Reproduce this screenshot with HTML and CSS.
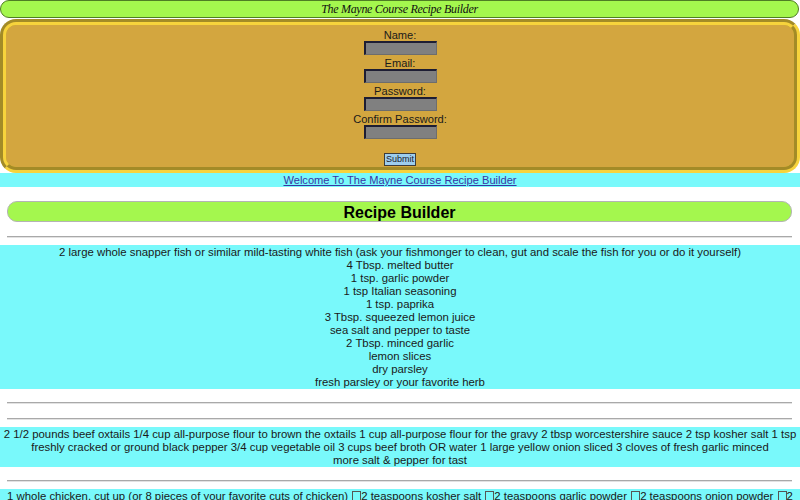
FILE: index.html
```html
<!DOCTYPE html>
<html>
<head>
<meta charset="utf-8">
<title>The Mayne Course Recipe Builder</title>
<link rel="stylesheet" href="styles.css">
</head>
<body>
<header class="top">The Mayne Course Recipe Builder</header>
<form class="signup">
  <label class="field-label">Name:</label>
  <input class="field" type="text">
  <label class="field-label">Email:</label>
  <input class="field" type="text">
  <label class="field-label">Password:</label>
  <input class="field" type="password">
  <label class="field-label">Confirm Password:</label>
  <input class="field" type="password">
  <button class="submit" type="button">Submit</button>
</form>
<div class="welcome"><a class="welcome-link" href="#">Welcome To The Mayne Course Recipe Builder</a></div>
<h1 class="builder">Recipe Builder</h1>
<hr class="rule">
<div class="recipe">2 large whole snapper fish or similar mild-tasting white fish (ask your fishmonger to clean, gut and scale the fish for you or do it yourself)<br>4 Tbsp. melted butter<br>1 tsp. garlic powder<br>1 tsp Italian seasoning<br>1 tsp. paprika<br>3 Tbsp. squeezed lemon juice<br>sea salt and pepper to taste<br>2 Tbsp. minced garlic<br>lemon slices<br>dry parsley<br>fresh parsley or your favorite herb</div>
<hr class="rule">
<hr class="rule">
<div class="recipe">2 1/2 pounds beef oxtails 1/4 cup all-purpose flour to brown the oxtails 1 cup all-purpose flour for the gravy 2 tbsp worcestershire sauce 2 tsp kosher salt 1 tsp freshly cracked or ground black pepper 3/4 cup vegetable oil 3 cups beef broth OR water 1 large yellow onion sliced 3 cloves of fresh garlic minced<br>more salt &amp; pepper for tast</div>
<hr class="rule">
<div class="recipe">1 whole chicken, cut up (or 8 pieces of your favorite cuts of chicken) <span class="box"></span>2 teaspoons kosher salt <span class="box"></span>2 teaspoons garlic powder <span class="box"></span>2 teaspoons onion powder <span class="box"></span>2 teaspoons smoked paprika <span class="box"></span>1 teaspoon black pepper <span class="box"></span>2 cups buttermilk <span class="box"></span>2 cups all-purpose flour</div>
</body>
</html>
```

FILE: styles.css
```css
html, body {
  margin: 0;
  padding: 0;
  background: #ffffff;
}

body {
  font-family: "Liberation Sans", Arial, sans-serif;
  font-size: 11.1px;
  line-height: 13px;
  color: #111;
}

.top {
  margin: 0 1px 0 0;
  height: 16px;
  line-height: 17px;
  background: #a4f74e;
  border: 1px solid #4f7d24;
  border-radius: 9px;
  text-align: center;
  font-family: "Liberation Serif", serif;
  font-style: italic;
  font-size: 12px;
  letter-spacing: -0.3px;
  color: #111;
}

.signup {
  margin: 1px 0 0 0;
  padding: 3px 0 1px;
  background: #d3a63f;
  border: 6px groove #f7d33c;
  border-radius: 16px;
  display: flex;
  flex-direction: column;
  align-items: center;
}

.field-label {
  display: block;
  line-height: 14px;
  height: 13px;
  color: #1a1a1a;
}

.field {
  box-sizing: border-box;
  width: 73px;
  height: 14px;
  margin: 0 0 1px;
  padding: 0;
  background: #808080;
  border-style: solid;
  border-width: 2px 1px 1px 2px;
  border-color: #1d1d33 #6d6d6d #6d6d6d #1d1d33;
}

.submit {
  box-sizing: border-box;
  margin-top: 13px;
  width: 32px;
  height: 13px;
  padding: 0;
  font-family: "Liberation Sans", Arial, sans-serif;
  font-size: 9px;
  line-height: 11px;
  color: #1a1a2a;
  background: #9dcdee;
  border: 1px solid #3c3c3c;
}

.welcome {
  height: 14px;
  line-height: 15px;
  background: #79f9fb;
  text-align: center;
}

.welcome-link {
  color: #3b35a3;
  text-decoration: underline;
}

.builder {
  margin: 14px 8px 0 7px;
  height: 18px;
  padding-top: 1px;
  line-height: 20px;
  background: #a4f74e;
  border: 1px solid #b4b4b4;
  border-radius: 10px;
  text-align: center;
  font-size: 16px;
  font-weight: bold;
  color: #000;
}

.rule {
  margin: 14px 8px 7px 7px;
  height: 0;
  border: 0;
  border-top: 1px solid #a9a9a9;
  border-bottom: 1px solid #e2e2e2;
}

.recipe {
  background: #79f9fb;
  text-align: center;
  font-size: 11.37px;
  line-height: 13px;
  padding-top: 1px;
  color: #1a1a1a;
}

.recipe + .rule {
  margin-top: 13px;
}

.box {
  display: inline-block;
  box-sizing: border-box;
  width: 9px;
  height: 11px;
  border: 1px solid #555;
  vertical-align: -2px;
  margin-left: 1px;
}
```
